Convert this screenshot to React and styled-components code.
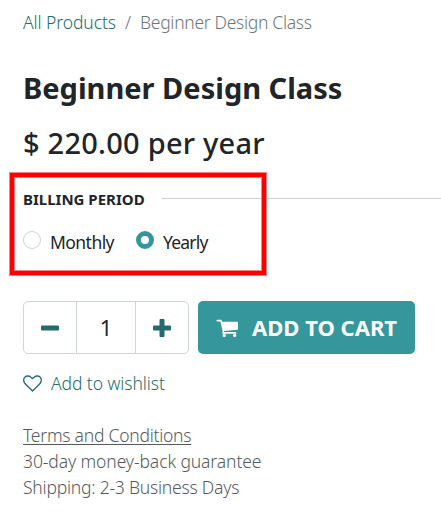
import React, { useState } from "react";
import styled, { createGlobalStyle } from "styled-components";

const GlobalStyle = createGlobalStyle`
  * { box-sizing: border-box; }
  body {
    margin: 0;
    background: #fff;
    color: #212529;
    font-family: "Noto Sans", "Open Sans", sans-serif;
    font-weight: 300;
    font-size: 17.5px;
    overflow: hidden;
  }
`;

const Page = styled.main`
  height: 511px;
  padding: 9px 0 0 23px;
  overflow: hidden;
`;

const Breadcrumb = styled.nav`
  display: flex;
  gap: 9px;
  height: 26px;
  line-height: 26px;
  color: #6c757d;
  white-space: nowrap;
`;

const Label = styled.span`
  letter-spacing: ${(p) => p.$spacing || 0}px;
  white-space: nowrap;
`;

const CrumbLink = styled.a`
  color: #256b6e;
`;

const Title = styled.h1`
  margin: 33px 0 0;
  font-size: 29px;
  font-weight: 700;
  line-height: 40px;
`;

const Price = styled.h2`
  margin: 15px 0 0;
  font-size: 29px;
  font-weight: 500;
  line-height: 40px;
`;

const Billing = styled.section`
  position: relative;
  margin-top: 26px;
  height: 82px;
`;

const Highlight = styled.div`
  position: absolute;
  left: -14px;
  top: -17px;
  width: 258px;
  height: 104px;
  border: 1px solid #ff8080;
  box-shadow: inset 0 0 0 4px #f00, inset 0 0 0 5px #ff8080;
`;

const BillingHeader = styled.div`
  display: flex;
  align-items: center;
  gap: 17px;
  height: 20px;
  font-size: 15px;
  font-weight: 700;
`;

const Rule = styled.span`
  flex: 1;
  height: 1px;
  margin-bottom: 2px;
  background: #d0d0d0;
`;

const Options = styled.div`
  display: flex;
  gap: 22px;
  margin-top: 20px;
`;

const Option = styled.label`
  display: flex;
  gap: 9px;
  height: 26px;
  line-height: 26px;
  font-weight: 400;
`;

const Radio = styled.input`
  appearance: none;
  width: 18px;
  height: 18px;
  margin: 2px 0 0;
  border: 1px solid #ced4da;
  border-radius: 50%;
  background: #fff;
  &:checked { border: 5px solid #35979c; }
`;

const Purchase = styled.div`
  display: flex;
  gap: 9px;
  margin-top: 30px;
  height: 53px;
`;

const Quantity = styled.div`
  display: grid;
  grid-template-columns: 52px 1fr 52px;
  width: 166px;
  border: 1px solid #ced4da;
  border-radius: 5px;
`;

const StepButton = styled.button`
  display: grid;
  place-items: center;
  padding: 0;
  border: 0;
  background: none;
  color: #256b6e;
`;

const Amount = styled.output`
  border: solid #ced4da;
  border-width: 0 1px;
  font-size: 22px;
  font-weight: 400;
  line-height: 51px;
  text-align: center;
`;

const CartButton = styled.button`
  display: flex;
  align-items: center;
  gap: 14px;
  width: 217px;
  padding: 0 0 0 18px;
  border: 0;
  border-radius: 5px;
  background: #35979c;
  color: #fff;
  font: 700 22px/53px "Noto Sans", sans-serif;
`;

const Wishlist = styled.button`
  display: flex;
  align-items: center;
  gap: 9px;
  height: 26px;
  margin-top: 16px;
  padding: 0;
  border: 0;
  background: none;
  color: #256b6e;
  font: 300 17.5px/26px "Noto Sans", sans-serif;
`;

const Terms = styled.footer`
  display: flex;
  flex-direction: column;
  align-items: flex-start;
  margin-top: 26px;
  line-height: 26px;
  color: #565a60;
`;

const TermsLink = styled.a`
  text-decoration: underline;
  text-decoration-thickness: 1px;
  text-underline-offset: 2px;
`;

function StepIcon({ plus }) {
  return (
    <svg width="18" height="18" viewBox="0 0 18 18" fill="currentColor">
      <rect y="6.5" width="18" height="5" rx="1" />
      {plus && <rect x="6.5" width="5" height="18" rx="1" />}
    </svg>
  );
}

function CartIcon() {
  return (
    <svg width="22" height="19" viewBox="0 0 22 19" fill="currentColor">
      <path d="M1.2 1.8h3.6q.8 0 1 .8l.3 1.1h15.2q.7 0 .7.7v6.5q0 .8-.8.9L8 13l.1 1.1h11.4q.8 0 .8.8t-.8.8H7q-.8 0-.8-.8l.5-1.5L4.4 3.4H1.2q-.8 0-.8-.8t.8-.8z" />
      <circle cx="8.2" cy="17.4" r="1.6" />
      <circle cx="18.7" cy="17.4" r="1.6" />
    </svg>
  );
}

function HeartIcon() {
  return (
    <svg width="19" height="19" viewBox="0 0 1792 1792" fill="currentColor">
      <path d="M1664 596q0-81-21.5-143t-55-98.5-81.5-59.5-94-31-98-8-112 25.5-110.5 64-86.5 72-60 61.5q-18 22-49 22t-49-22q-24-28-60-61.5t-86.5-72-110.5-64-112-25.5-98 8-94 31-81.5 59.5-55 98.5-21.5 143q0 168 187 355l581 560 580-559q188-188 188-356zm128 0q0 221-229 450l-623 600q-18 18-44 18t-44-18l-624-602q-10-8-27.5-26t-55.5-65.5-68-97.5-53.5-121-23.5-138q0-220 127-344t351-124q62 0 126.5 21.5t120 58 95.5 68.5 76 68q36-36 76-68t95.5-68.5 120-58 126.5-21.5q224 0 351 124t127 344z" />
    </svg>
  );
}

const PERIODS = [
  { name: "Monthly", spacing: -0.55 },
  { name: "Yearly", spacing: -0.8 },
];

export default function App() {
  const [period, setPeriod] = useState("Yearly");
  const [count, setCount] = useState(1);
  return (
    <Page>
      <GlobalStyle />
      <Breadcrumb>
        <CrumbLink><Label $spacing={-0.08}>All Products</Label></CrumbLink>
        <span>/</span>
        <Label $spacing={-0.3}>Beginner Design Class</Label>
      </Breadcrumb>
      <Title><Label>Beginner Design Class</Label></Title>
      <Price><Label $spacing={0.24}>$ 220.00 per year</Label></Price>
      <Billing>
        <BillingHeader>
          <Label>BILLING PERIOD</Label>
          <Rule />
        </BillingHeader>
        <Options>
          {PERIODS.map(({ name, spacing }) => (
            <Option key={name}>
              <Radio type="radio" name="period" checked={period === name} onChange={() => setPeriod(name)} />
              <Label $spacing={spacing}>{name}</Label>
            </Option>
          ))}
        </Options>
        <Highlight />
      </Billing>
      <Purchase>
        <Quantity>
          <StepButton aria-label="Decrease" onClick={() => setCount(Math.max(1, count - 1))}><StepIcon /></StepButton>
          <Amount>{count}</Amount>
          <StepButton aria-label="Increase" onClick={() => setCount(count + 1)}><StepIcon plus /></StepButton>
        </Quantity>
        <CartButton><CartIcon /><Label>ADD TO CART</Label></CartButton>
      </Purchase>
      <Wishlist><HeartIcon /><Label $spacing={-0.07}>Add to wishlist</Label></Wishlist>
      <Terms>
        <TermsLink><Label $spacing={-0.24}>Terms and Conditions</Label></TermsLink>
        <Label $spacing={-0.1}>30-day money-back guarantee</Label>
        <Label $spacing={-0.22}>Shipping: 2-3 Business Days</Label>
      </Terms>
    </Page>
  );
}
